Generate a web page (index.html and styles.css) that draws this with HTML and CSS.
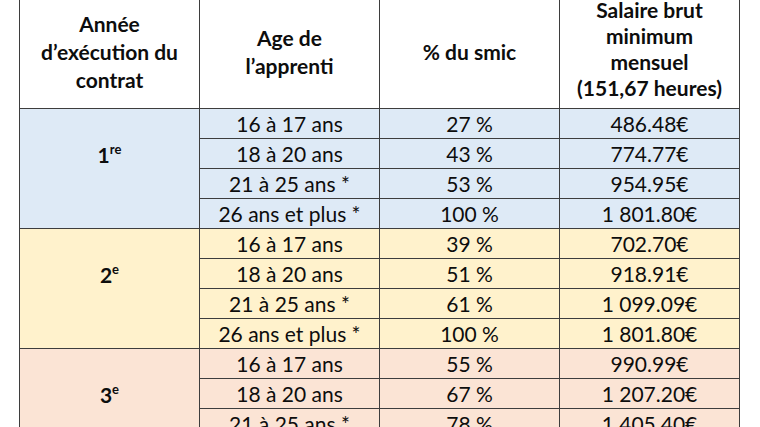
FILE: index.html
```html
<!DOCTYPE html>
<html lang="fr">
<head>
<meta charset="utf-8">
<title>Salaire apprenti</title>
<link rel="stylesheet" href="styles.css">
</head>
<body>
<table class="grid">
  <colgroup>
    <col class="c1"><col class="c2"><col class="c3"><col class="c4">
  </colgroup>
  <thead>
    <tr class="head">
      <th>Année<br>d’exécution du<br>contrat</th>
      <th>Age de<br>l’apprenti</th>
      <th>% du smic</th>
      <th class="salary">Salaire brut<br>minimum<br>mensuel<br>(151,67 heures)</th>
    </tr>
  </thead>
  <tbody class="y1">
    <tr><td class="year" rowspan="4">1<sup>re</sup></td><td>16 à 17 ans</td><td>27 %</td><td>486.48€</td></tr>
    <tr><td>18 à 20 ans</td><td>43 %</td><td>774.77€</td></tr>
    <tr><td>21 à 25 ans *</td><td>53 %</td><td>954.95€</td></tr>
    <tr><td>26 ans et plus *</td><td>100 %</td><td>1 801.80€</td></tr>
  </tbody>
  <tbody class="y2">
    <tr><td class="year" rowspan="4">2<sup>e</sup></td><td>16 à 17 ans</td><td>39 %</td><td>702.70€</td></tr>
    <tr><td>18 à 20 ans</td><td>51 %</td><td>918.91€</td></tr>
    <tr><td>21 à 25 ans *</td><td>61 %</td><td>1 099.09€</td></tr>
    <tr><td>26 ans et plus *</td><td>100 %</td><td>1 801.80€</td></tr>
  </tbody>
  <tbody class="y3">
    <tr><td class="year" rowspan="4">3<sup>e</sup></td><td>16 à 17 ans</td><td>55 %</td><td>990.99€</td></tr>
    <tr><td>18 à 20 ans</td><td>67 %</td><td>1 207.20€</td></tr>
    <tr><td>21 à 25 ans *</td><td>78 %</td><td>1 405.40€</td></tr>
    <tr><td>26 ans et plus *</td><td>100 %</td><td>1 801.80€</td></tr>
  </tbody>
</table>
</body>
</html>
```

FILE: styles.css
```css
html, body {
  margin: 0;
  padding: 0;
  background: #ffffff;
}

body {
  font-family: Lato, "Open Sans", sans-serif;
  color: #0d0d0d;
}

.grid {
  border-collapse: collapse;
  table-layout: fixed;
  width: 720px;
  margin: -5px 0 0 19px;
  font-size: 21px;
}

.c1, .c2, .c3, .c4 { width: 180px; }

.grid th,
.grid td {
  border: 1px solid #3d3d3d;
  text-align: center;
  padding: 0;
}

.head th {
  height: 112px;
  line-height: 28px;
  font-weight: 700;
  vertical-align: middle;
  background: #ffffff;
}

.head th.salary {
  height: 106px;
  line-height: 26px;
  padding-bottom: 6px;
}

.grid td {
  height: 29px;
  line-height: 29px;
  vertical-align: middle;
}

.grid td.year {
  font-weight: 700;
  padding-bottom: 28px;
  line-height: 24px;
}

.year sup {
  font-size: 13px;
  vertical-align: 9px;
  line-height: 0;
}

.y1 td { background: #deeaf6; }
.y2 td { background: #fff2cc; }
.y3 td { background: #fbe4d5; }
```
